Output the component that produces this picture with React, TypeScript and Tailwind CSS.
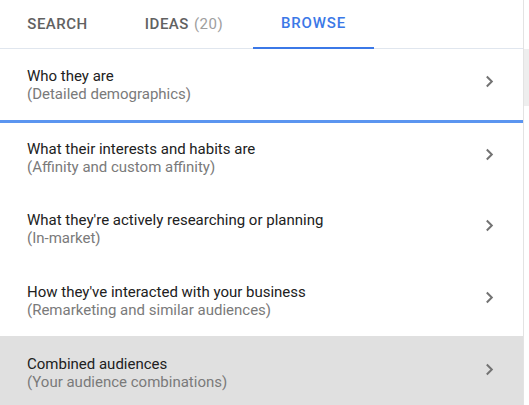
import React from "react";

const rows = [
  { title: "Who they are", sub: "(Detailed demographics)" },
  { title: "What their interests and habits are", sub: "(Affinity and custom affinity)" },
  { title: "What they're actively researching or planning", sub: "(In-market)" },
  { title: "How they've interacted with your business", sub: "(Remarketing and similar audiences)" },
  { title: "Combined audiences", sub: "(Your audience combinations)" },
];

function Chevron() {
  return (
    <svg width="9" height="13" viewBox="0 0 9 13" fill="none" className="mb-[6px]">
      <path d="M1.8 1.5 L6.8 6.5 L1.8 11.5" stroke="#737373" strokeWidth="2" />
    </svg>
  );
}

export default function App() {
  return (
    <div
      className="flex w-[529px] h-[405px] overflow-hidden bg-white"
      style={{ fontFamily: "Roboto, 'Liberation Sans', sans-serif" }}
    >
      <div className="w-[524px] border-r border-[#e3e3e3] flex flex-col">
        {/* tabs */}
        <div className="flex shrink-0 h-[49px] border-b border-[#e0e6ee] text-[15px] font-medium tracking-[0.5px]">
          <div className="w-[115px] flex items-center justify-center text-[#616161]">SEARCH</div>
          <div className="w-[138px] flex items-center justify-center text-[#616161]">
            IDEAS<span className="ml-[5px] font-normal text-[#9e9e9e]">(20)</span>
          </div>
          <div className="w-[121px] flex items-center justify-center text-[#3b78e7] border-b-[2px] border-[#3b78e7] -mb-px tracking-[0.8px]">
            BROWSE
          </div>
        </div>

        {rows.map((r, i) => (
          <div
            key={i}
            className={`flex items-center justify-between pl-[27px] pr-[29px] shrink-0 ${
              i === 0
                ? "h-[74px] border-b-[3px] border-[#5b95f0]"
                : i === 1
                ? "h-[69px]"
                : "h-[72px]"
            } ${i === 4 ? "bg-[#e0e0e0]" : ""}`}
          >
            <div className="text-[15px] leading-[18px] pt-[1px]">
              <div className="text-[#212121]">{r.title}</div>
              <div className="text-[#7a7a7a]">{r.sub}</div>
            </div>
            <Chevron />
          </div>
        ))}
      </div>
      <div className="flex-1 flex flex-col">
        <div className="h-[49px]" />
        <div className="h-[57px] bg-[#eeeeee]" />
      </div>
    </div>
  );
}
